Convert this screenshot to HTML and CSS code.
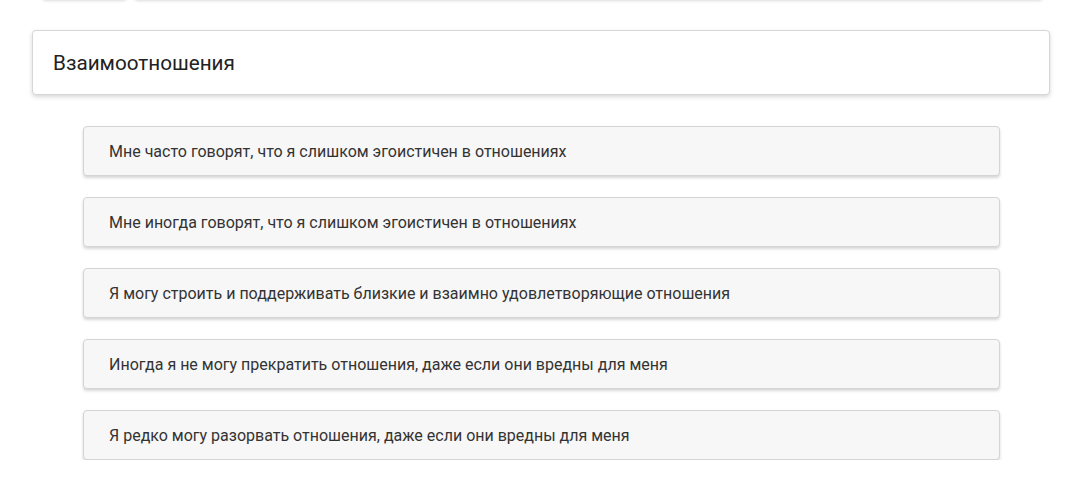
FILE: index.html
```html
<!DOCTYPE html>
<html lang="ru">
<head>
<meta charset="utf-8">
<link rel="stylesheet" href="styles.css">
</head>
<body>
<div class="page">
  <div class="top-row">
    <div class="top-box top-box-small"></div>
    <div class="top-box top-box-wide"></div>
  </div>
  <div class="section-card">
    <h2 class="section-title">Взаимоотношения</h2>
  </div>
  <ul class="options">
    <li class="option">Мне часто говорят, что я слишком эгоистичен в отношениях</li>
    <li class="option">Мне иногда говорят, что я слишком эгоистичен в отношениях</li>
    <li class="option">Я могу строить и поддерживать близкие и взаимно удовлетворяющие отношения</li>
    <li class="option">Иногда я не могу прекратить отношения, даже если они вредны для меня</li>
    <li class="option">Я редко могу разорвать отношения, даже если они вредны для меня</li>
  </ul>
</div>
</body>
</html>
```

FILE: styles.css
```css
html, body {
  margin: 0;
  padding: 0;
  background: #ffffff;
}

body {
  font-family: Roboto, "Liberation Sans", Arial, sans-serif;
  color: #222;
}

.page {
  width: 1067px;
  overflow: hidden;
}

.top-row {
  display: flex;
  gap: 7px;
  height: 40px;
  margin-top: -40px;
  padding-left: 42px;
}

.top-box {
  height: 40px;
  background: #fff;
  border-radius: 4px;
  box-shadow: 0 1px 3px rgba(0, 0, 0, 0.14);
}

.top-box-small {
  width: 85px;
}

.top-box-wide {
  width: 909px;
}

.section-card {
  margin: 30px 0 0 32px;
  width: 996px;
  height: 63px;
  border: 1px solid #d6d6d6;
  border-radius: 4px;
  background: #fff;
  box-shadow: 0 2px 4px rgba(0, 0, 0, 0.16);
  display: flex;
  align-items: center;
  padding-left: 20px;
}

.section-title {
  margin: 0;
  font-size: 20.7px;
  font-weight: 400;
  color: #222;
  line-height: 1;
  padding-top: 1px;
}

.options {
  list-style: none;
  margin: 31px 0 0 83px;
  padding: 0;
  display: flex;
  flex-direction: column;
  gap: 21px;
}

.option {
  width: 890px;
  height: 48px;
  border: 1px solid #d4d4d4;
  border-radius: 4px;
  background: #f7f7f7;
  box-shadow: 0 2px 3px rgba(0, 0, 0, 0.16);
  display: flex;
  align-items: center;
  padding-left: 25px;
  font-size: 16px;
  color: #333;
}
```
